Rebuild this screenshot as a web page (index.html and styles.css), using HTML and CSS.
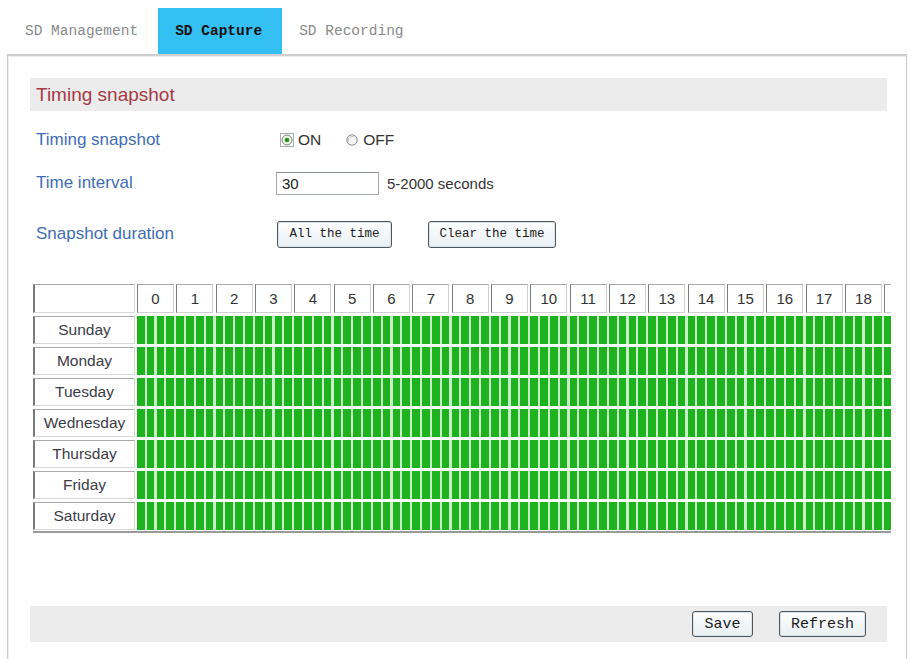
FILE: index.html
```html
<!DOCTYPE html>
<html>
<head>
<meta charset="utf-8">
<title>SD Capture</title>
<link rel="stylesheet" href="styles.css">
</head>
<body>
<div class="tabs">
  <div class="tab">SD Management</div>
  <div class="tab active">SD Capture</div>
  <div class="tab">SD Recording</div>
</div>
<div class="panel">
  <div class="section-head">Timing snapshot</div>
  <div class="form">
    <div class="row r1">
      <div class="label">Timing snapshot</div>
      <div class="field">
        <span class="radio">
          <svg width="14" height="14" viewBox="0 0 14 14"><rect x="0.5" y="0.5" width="13" height="13" fill="none" stroke="#555" stroke-dasharray="1 1"/><circle cx="7" cy="7" r="5" fill="#e9f3e3" stroke="#7a8a76"/><circle cx="7" cy="7" r="2.3" fill="#2f8a2a"/></svg>
        </span>
        <span class="opt">ON</span>
        <span class="radio off">
          <svg width="14" height="14" viewBox="0 0 14 14"><circle cx="7" cy="7" r="5.2" fill="#f4f4f4" stroke="#8a8a8a"/><path d="M3.6 8.5 A3.8 3.8 0 0 1 8.5 3.6" fill="none" stroke="#c4c4c4" stroke-width="1"/></svg>
        </span>
        <span class="opt">OFF</span>
      </div>
    </div>
    <div class="row r2">
      <div class="label">Time interval</div>
      <div class="field">
        <div class="input">30</div>
        <span class="hint">5-2000 seconds</span>
      </div>
    </div>
    <div class="row r3">
      <div class="label">Snapshot duration</div>
      <div class="field">
        <button class="btn small">All the time</button>
        <button class="btn small clear">Clear the time</button>
      </div>
    </div>
  </div>

  <div class="schedule">
    <div class="srow head">
      <div class="day blank"></div>
      <div class="hour">0</div><div class="hour">1</div><div class="hour">2</div><div class="hour">3</div><div class="hour">4</div><div class="hour">5</div><div class="hour">6</div><div class="hour">7</div><div class="hour">8</div><div class="hour">9</div><div class="hour">10</div><div class="hour">11</div><div class="hour">12</div><div class="hour">13</div><div class="hour">14</div><div class="hour">15</div><div class="hour">16</div><div class="hour">17</div><div class="hour">18</div><div class="hour"></div>
    </div>
    <div class="srow"><div class="day">Sunday</div><div class="strip"></div></div>
    <div class="srow"><div class="day">Monday</div><div class="strip"></div></div>
    <div class="srow"><div class="day">Tuesday</div><div class="strip"></div></div>
    <div class="srow"><div class="day">Wednesday</div><div class="strip"></div></div>
    <div class="srow"><div class="day">Thursday</div><div class="strip"></div></div>
    <div class="srow"><div class="day">Friday</div><div class="strip"></div></div>
    <div class="srow"><div class="day">Saturday</div><div class="strip"></div></div>
  </div>

  <div class="actions">
    <button class="btn big save">Save</button>
    <button class="btn big refresh">Refresh</button>
  </div>
</div>
</body>
</html>
```
FILE: styles.css
```css
html, body {
  margin: 0;
  padding: 0;
  background: #fff;
}
body {
  font-family: "Liberation Sans", Arial, sans-serif;
  overflow: hidden;
  height: 659px;
}
.tabs {
  display: flex;
  padding-top: 8px;
  padding-left: 8px;
  height: 46px;
}
.tab {
  padding: 0 20px 0 17px;
  height: 46px;
  line-height: 46px;
  font-family: "Liberation Mono", "Courier New", monospace;
  font-size: 14.5px;
  color: #8a8a8a;
}
.tab.active {
  background: #35c0f3;
  color: #111;
  font-weight: bold;
}
.panel {
  box-sizing: border-box;
  margin-left: 7px;
  width: 900px;
  height: 605px;
  border-left: 1px solid #c9c9c9;
  border-right: 1px solid #c9c9c9;
  border-top: 2px solid #cfcfcf;
  box-shadow: inset 1px 1px 0 #efefef;
  padding: 22px 19px 0 22px;
}
.section-head {
  height: 33px;
  line-height: 34px;
  background: #ececec;
  padding-left: 6px;
  font-size: 19px;
  color: #a53a47;
}
.form {
  padding-top: 8px;
}
.row {
  display: flex;
  align-items: center;
}
.r1 { height: 42px; }
.r2 { height: 44px; }
.r3 { height: 58px; }
.label {
  width: 240px;
  padding-left: 6px;
  font-size: 17px;
  color: #3f6db5;
}
.field {
  display: flex;
  align-items: center;
}
.radio {
  display: flex;
  margin-left: 4px;
}
.radio.off {
  margin-left: 24px;
}
.opt {
  margin-left: 4px;
  font-size: 15.5px;
  color: #333;
}
.input {
  box-sizing: border-box;
  width: 103px;
  height: 23px;
  border: 1px solid #a2a9ae;
  border-top-color: #8c9398;
  padding-left: 5px;
  line-height: 21px;
  font-size: 15px;
  color: #222;
}
.hint {
  margin-left: 8px;
  font-size: 15px;
  color: #333;
}
.btn {
  box-sizing: border-box;
  border: 1px solid #4e565c;
  border-radius: 3px;
  background: linear-gradient(#fdfeff, #e9eff3);
  box-shadow: inset 0 0 0 1px #d7e4ec;
  font-family: "Liberation Mono", "Courier New", monospace;
  color: #1c1c1c;
  padding: 0;
  cursor: pointer;
}
.btn.small {
  width: 115px;
  height: 27px;
  font-size: 12.5px;
  margin-left: 1px;
}
.btn.clear {
  width: 128px;
  margin-left: 36px;
}
.schedule {
  margin-top: 21px;
  margin-left: 3px;
  width: 858px;
  overflow: hidden;
  border-bottom: 2px solid #9a9a9a;
  padding-bottom: 1px;
}
.srow {
  display: flex;
  height: 28px;
  margin-top: 3px;
  width: 1100px;
}
.srow.head {
  height: 29px;
  margin-top: 0;
}
.day {
  box-sizing: border-box;
  flex: 0 0 102px;
  margin-right: 2px;
  border-top: 1px solid #a8a8a8;
  border-left: 2px solid #7a7a7a;
  border-right: 1px solid #d8d8d8;
  border-bottom: 1px solid #d8d8d8;
  background: #fff;
  text-align: center;
  line-height: 26px;
  font-size: 15.5px;
  color: #3c3c46;
}
.hour {
  box-sizing: border-box;
  flex: 0 0 37px;
  margin-right: 2.33px;
  border-top: 1px solid #a8a8a8;
  border-left: 1px solid #7c7c7c;
  border-right: 1px solid #d0d0d0;
  border-bottom: 1px solid #d0d0d0;
  background: #fff;
  text-align: center;
  line-height: 28px;
  font-size: 15px;
  color: #333;
}
.strip {
  flex: 0 0 944px;
  height: 28px;
  background: repeating-linear-gradient(to right, #1fb21f 0, #1fb21f 7.6px, #c9efc9 7.6px, #c9efc9 9.833px);
}
.actions {
  margin-top: 73px;
  height: 36px;
  background: #ececec;
  display: flex;
  justify-content: flex-end;
  align-items: center;
  padding-right: 21px;
}
.btn.big {
  height: 26px;
  font-size: 15px;
}
.save { width: 61px; }
.refresh { width: 87px; margin-left: 26px; }
```
